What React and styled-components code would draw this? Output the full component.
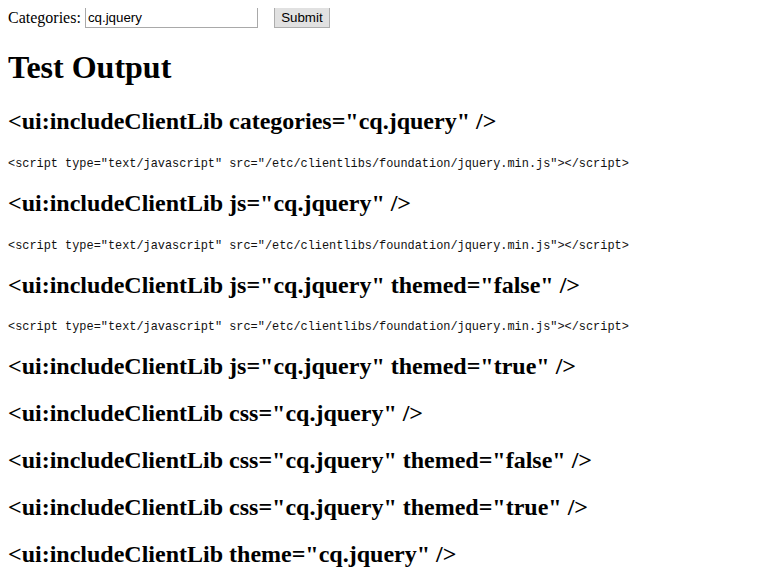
import React from "react";
import styled, { createGlobalStyle } from "styled-components";

const Global = createGlobalStyle`
  html, body { background: #fff; }
  body {
    margin: 8px;
    font-family: "Liberation Serif", "Times New Roman", serif;
    font-size: 16px;
    color: #000;
  }
`;

const Form = styled.form`
  display: flex;
  align-items: center;
  height: 21px;
  margin: -1px 0 0;
`;

const Label = styled.label`
  font-size: 16px;
  margin-right: 4px;
`;

const TextInput = styled.input`
  box-sizing: border-box;
  width: 173px;
  height: 21px;
  padding: 1px 2px;
  border: 1px solid #a9a9a9;
  font-family: "Liberation Sans", Arial, sans-serif;
  font-size: 13.33px;
  color: #000;
  margin: 0 16px 0 0;
  outline: none;
`;

const SubmitButton = styled.button`
  box-sizing: border-box;
  width: 56px;
  height: 21px;
  padding: 1px 6px;
  border: 1px solid #adadad;
  background: #e1e1e1;
  font-family: "Liberation Sans", Arial, sans-serif;
  font-size: 13.33px;
  color: #000;
  margin: 0;
`;

const Title = styled.h1`
  font-size: 32px;
  font-weight: bold;
  margin: 21.44px 0;
  line-height: normal;
`;

const Heading = styled.h2`
  font-size: 24px;
  font-weight: bold;
  margin: 19.92px 0;
  line-height: normal;
`;

const Code = styled.pre`
  font-family: "Liberation Mono", "DejaVu Sans Mono", monospace;
  font-size: 11.9px;
  line-height: 15px;
  padding-top: 2px;
  margin: 13px 0 -2px;
  color: #111;
`;

const scriptTag =
  '<script type="text/javascript" src="/etc/clientlibs/foundation/jquery.min.js"></script>';

const items = [
  { tag: '<ui:includeClientLib categories="cq.jquery" />', out: scriptTag },
  { tag: '<ui:includeClientLib js="cq.jquery" />', out: scriptTag },
  { tag: '<ui:includeClientLib js="cq.jquery" themed="false" />', out: scriptTag },
  { tag: '<ui:includeClientLib js="cq.jquery" themed="true" />' },
  { tag: '<ui:includeClientLib css="cq.jquery" />' },
  { tag: '<ui:includeClientLib css="cq.jquery" themed="false" />' },
  { tag: '<ui:includeClientLib css="cq.jquery" themed="true" />' },
  { tag: '<ui:includeClientLib theme="cq.jquery" />' },
];

export default function App() {
  return (
    <>
      <Global />
      <Form onSubmit={(e) => e.preventDefault()}>
        <Label htmlFor="cat">Categories:</Label>
        <TextInput id="cat" type="text" defaultValue="cq.jquery" />
        <SubmitButton type="submit">Submit</SubmitButton>
      </Form>
      <Title>Test Output</Title>
      {items.map((it, i) => (
        <React.Fragment key={i}>
          <Heading>{it.tag}</Heading>
          {it.out && <Code>{it.out}</Code>}
        </React.Fragment>
      ))}
    </>
  );
}
